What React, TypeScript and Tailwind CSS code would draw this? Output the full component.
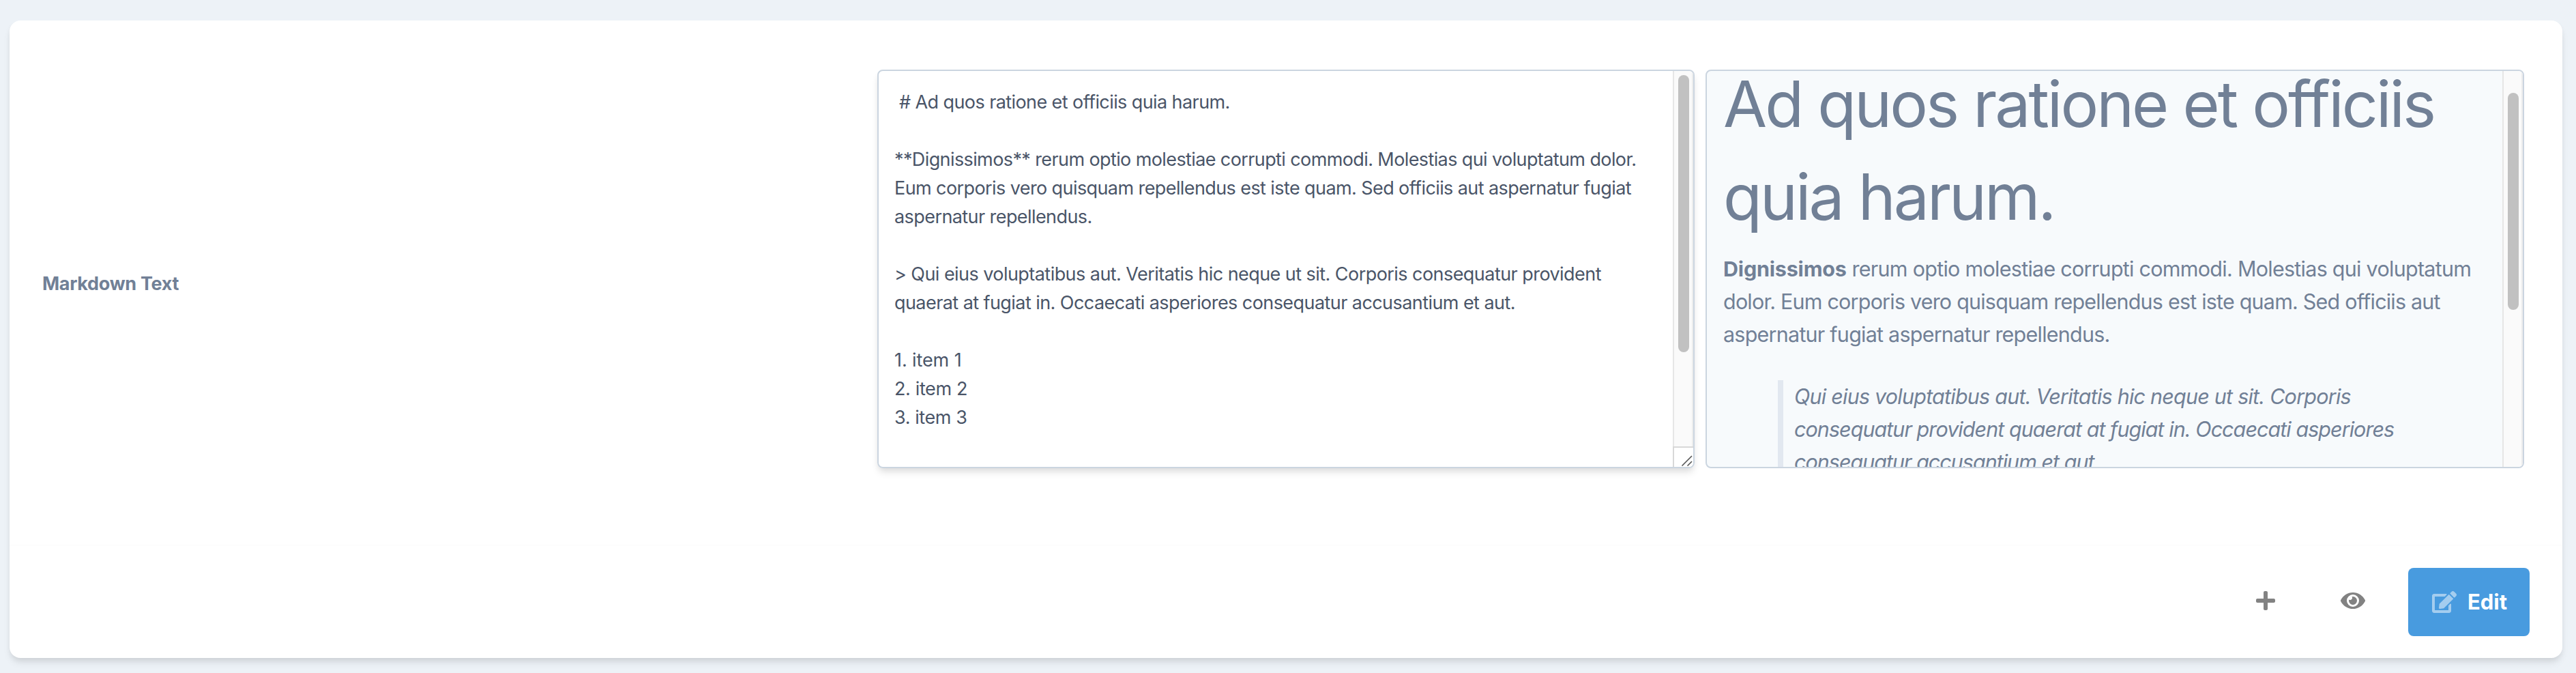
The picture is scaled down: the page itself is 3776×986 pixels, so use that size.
import { FaEdit, FaEye, FaPlus } from "react-icons/fa";

const source = [
  { text: " # Ad quos ratione et officiis quia harum.", tracking: "tracking-[-0.586px]" },
  { text: "", tracking: "" },
  {
    text: "**Dignissimos** rerum optio molestiae corrupti commodi. Molestias qui voluptatum dolor.",
    tracking: "tracking-[-0.605px]",
  },
  {
    text: "Eum corporis vero quisquam repellendus est iste quam. Sed officiis aut aspernatur fugiat",
    tracking: "tracking-[-0.589px]",
  },
  { text: "aspernatur repellendus.", tracking: "tracking-[-0.577px]" },
  { text: "", tracking: "" },
  {
    text: "> Qui eius voluptatibus aut. Veritatis hic neque ut sit. Corporis consequatur provident",
    tracking: "tracking-[-0.551px]",
  },
  {
    text: "quaerat at fugiat in. Occaecati asperiores consequatur accusantium et aut.",
    tracking: "tracking-[-0.564px]",
  },
  { text: "", tracking: "" },
  { text: "1. item 1", tracking: "tracking-[-0.1px]" },
  { text: "2. item 2", tracking: "tracking-[-0.367px]" },
  { text: "3. item 3", tracking: "tracking-[-0.417px]" },
];

function Editor() {
  return (
    <div className="flex h-[584px] w-[1198px] overflow-hidden rounded-lg border-2 border-[#cbd5e0] bg-white">
      <div className="min-w-0 flex-1 pt-[25px] pl-[23px] text-[27px] leading-[42px] whitespace-pre text-[#4a5568]">
        {source.map((line, i) => (
          <div key={i} className={`h-[42px] ${line.tracking}`}>
            {line.text}
          </div>
        ))}
      </div>
      <div className="flex w-[30px] shrink-0 flex-col">
        <div className="flex-1 border-x-2 border-l-[#e6e6e6] border-r-[#ededed] bg-[#fafafa] pt-1.5 pl-1.5">
          <div className="h-[406px] w-4 rounded-full bg-[#c1c1c1]" />
        </div>
        <div className="h-[30px] border-t-2 border-l-2 border-[#d8d8d8] bg-white">
          <svg className="h-7 w-7" viewBox="0 0 28 28" stroke="#555" strokeWidth="1.6" fill="none">
            <path d="M11.5 26.5 26 12M19.5 26.5 26 20" />
          </svg>
        </div>
      </div>
    </div>
  );
}

function Preview() {
  return (
    <div className="flex h-[584px] w-[1200px] overflow-hidden rounded-lg border-2 border-[#cbd5e0] bg-[#f7fafc] text-[#718096]">
      <div className="min-w-0 flex-1 pl-6 text-[30.5px] leading-[48px] whitespace-nowrap">
        <h1 className="-mt-5 text-[93px] leading-[136px] tracking-[-3px]">
          Ad quos ratione et officiis
          <br />
          quia harum.
        </h1>
        <p className="mt-3.5">
          <span className="block tracking-[-0.73px]">
            <strong className="font-bold tracking-[-0.2px]">Dignissimos</strong> rerum optio molestiae corrupti
            commodi. Molestias qui voluptatum
          </span>
          <span className="block tracking-[-0.797px]">
            dolor. Eum corporis vero quisquam repellendus est iste quam. Sed officiis aut
          </span>
          <span className="block tracking-[-0.773px]">aspernatur fugiat aspernatur repellendus.</span>
        </p>
        <blockquote className="mt-[43px] ml-20 border-l-8 border-[#e2e8f0] pl-4 italic">
          <span className="block tracking-[-0.774px]">
            Qui eius voluptatibus aut. Veritatis hic neque ut sit. Corporis
          </span>
          <span className="block tracking-[-0.95px]">
            consequatur provident quaerat at fugiat in. Occaecati asperiores
          </span>
          <span className="block tracking-[-0.99px]">consequatur accusantium et aut.</span>
        </blockquote>
      </div>
      <div className="w-[30px] shrink-0 border-x-2 border-l-[#e6e6e6] border-r-[#ededed] bg-[#fafafa] pt-8 pl-1.5">
        <div className="h-[318px] w-4 rounded-full bg-[#c1c1c1]" />
      </div>
    </div>
  );
}

export default function App() {
  return (
    <div className="h-[986px] overflow-hidden bg-[#edf2f7] pt-[30px] pl-[14px] font-['Inter',sans-serif]">
      <div className="flex h-[934px] w-[3742px] flex-col rounded-2xl bg-white shadow-[0_8px_12px_-2px_rgba(0,0,0,0.1),0_4px_8px_-2px_rgba(0,0,0,0.06)]">
        <div className="flex h-[768px] pl-12">
          <div className="flex w-[1224px] items-center pt-1 text-[27px] leading-[42px] font-bold tracking-[-0.3px] text-[#718096]">
            Markdown Text
          </div>
          <div className="flex gap-4 pt-[72px]">
            <div className="h-[584px] rounded-lg shadow-[0_8px_12px_-2px_rgba(0,0,0,0.1),0_4px_8px_-2px_rgba(0,0,0,0.06)]">
              <Editor />
            </div>
            <Preview />
          </div>
        </div>
        <div className="flex flex-1 items-start justify-end border-t-2 border-[#fdfdfd] pt-8 pr-12 text-[#828282]">
          <button className="mt-8 mr-24 flex">
            <FaPlus className="h-8 w-7" />
          </button>
          <button className="mt-8 mr-[63px] flex">
            <FaEye className="h-8 w-9" />
          </button>
          <button className="flex h-[100px] w-[178px] items-center rounded-lg bg-[#489bdf] pl-[35px] text-[31px] font-bold text-white">
            <FaEdit className="mr-4 h-8 w-9 opacity-50" />
            Edit
          </button>
        </div>
      </div>
    </div>
  );
}
